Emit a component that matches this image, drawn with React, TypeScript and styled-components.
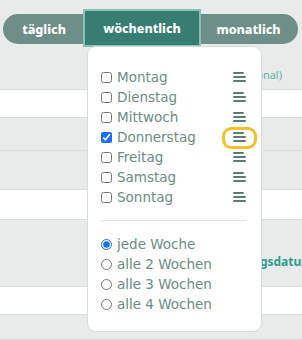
import React, { useState } from 'react';
import styled, { createGlobalStyle } from 'styled-components';

const GlobalStyle = createGlobalStyle`
  html, body {
    margin: 0;
    padding: 0;
    background: #e8ebea;
    font-family: 'DejaVu Sans', 'Noto Sans', sans-serif;
  }
`;

const Page = styled.div`
  position: relative;
  width: 302px;
  height: 340px;
  overflow: hidden;
  background: #e8ebea;
`;

const Header = styled.div`
  padding: 14px 4px 0 3px;
`;

const Toggle = styled.div`
  display: flex;
  height: 30px;
  border-radius: 15px;
  background: #6d8f87;
`;

const Segment = styled.button<{ $active?: boolean; $width: number }>`
  width: ${(p) => p.$width}px;
  border: none;
  padding: 0;
  font-family: 'Noto Sans', sans-serif;
  font-weight: 800;
  font-size: 12.5px;
  color: #ffffff;
  background: ${(p) => (p.$active ? '#377d72' : 'transparent')};
  box-shadow: ${(p) => (p.$active ? '0 0 0 2px #86c2b6' : 'none')};
  height: ${(p) => (p.$active ? '34px' : '30px')};
  margin-top: ${(p) => (p.$active ? '-3px' : '0')};
  position: relative;
  z-index: ${(p) => (p.$active ? 1 : 0)};
`;

const Row = styled.div<{ $white?: boolean; $height: number }>`
  height: ${(p) => p.$height}px;
  box-sizing: border-box;
  background: ${(p) => (p.$white ? '#ffffff' : '#e8ebea')};
  border-bottom: 1px solid #d7dddb;
  position: relative;
`;

const Hint = styled.span`
  position: absolute;
  right: 20px;
  top: 23px;
  font-family: 'Noto Sans', sans-serif;
  font-size: 11px;
  color: #5fb1a1;
`;

const FieldLabel = styled.span`
  position: absolute;
  right: -11px;
  top: 33px;
  font-family: 'Noto Sans', sans-serif;
  font-size: 12px;
  font-weight: bold;
  color: #2f9c89;
  white-space: nowrap;
`;

const Dropdown = styled.div`
  position: absolute;
  left: 87px;
  top: 46px;
  width: 175px;
  height: 286px;
  box-sizing: border-box;
  background: #ffffff;
  border: 1px solid #d8dcdb;
  border-radius: 9px;
  padding: 20px 15px 0 12px;
  z-index: 2;
`;

const List = styled.div`
  display: flex;
  flex-direction: column;
`;

const Item = styled.label`
  display: flex;
  align-items: center;
  height: 20px;
  font-size: 13.5px;
  color: #6d8b85;
  cursor: pointer;
`;

const Check = styled.input`
  width: 11px;
  height: 11px;
  margin: 0 5px 0 1px;
  accent-color: #1a6ef0;
`;

const Handle = styled.span<{ $marked?: boolean }>`
  margin-left: auto;
  position: relative;
  width: 13px;
  height: 12px;
  display: flex;
  flex-direction: column;
  justify-content: space-between;
  padding: 1px 0;
  box-sizing: border-box;

  span {
    height: 2px;
    background: #5f7b75;
    border-radius: 1px;
  }
  span:first-child {
    width: 11px;
  }

  &::after {
    content: '';
    display: ${(p) => (p.$marked ? 'block' : 'none')};
    position: absolute;
    left: -11px;
    top: -4px;
    width: 35px;
    height: 22px;
    box-sizing: border-box;
    border: 3px solid #f0c232;
    border-radius: 9px;
  }
`;

const Divider = styled.div`
  height: 1px;
  background: #e2e6e5;
  margin: 13px 0 13px 1px;
`;

const days = ['Montag', 'Dienstag', 'Mittwoch', 'Donnerstag', 'Freitag', 'Samstag', 'Sonntag'];
const intervals = ['jede Woche', 'alle 2 Wochen', 'alle 3 Wochen', 'alle 4 Wochen'];

export default function App() {
  const [checked, setChecked] = useState<string[]>(['Donnerstag']);
  const [interval, setInterval] = useState('jede Woche');

  const toggleDay = (day: string) =>
    setChecked((c) => (c.includes(day) ? c.filter((d) => d !== day) : [...c, day]));

  return (
    <Page>
      <GlobalStyle />
      <Header>
        <Toggle>
          <Segment $width={82}>täglich</Segment>
          <Segment $width={114} $active>
            wöchentlich
          </Segment>
          <Segment $width={99}>monatlich</Segment>
        </Toggle>
      </Header>
      <Row $height={46}>
        <Hint>(optional)</Hint>
      </Row>
      <Row $height={28} $white />
      <Row $height={33} />
      <Row $height={39} />
      <Row $height={30} $white />
      <Row $height={67}>
        <FieldLabel>Wiederholungsdatum</FieldLabel>
      </Row>
      <Row $height={28} $white />
      <Row $height={25} />

      <Dropdown>
        <List>
          {days.map((day) => (
            <Item key={day}>
              <Check type="checkbox" checked={checked.includes(day)} onChange={() => toggleDay(day)} />
              {day}
              <Handle $marked={day === 'Donnerstag'}>
                <span />
                <span />
                <span />
              </Handle>
            </Item>
          ))}
        </List>
        <Divider />
        <List>
          {intervals.map((iv) => (
            <Item key={iv}>
              <Check type="radio" name="interval" checked={interval === iv} onChange={() => setInterval(iv)} />
              {iv}
            </Item>
          ))}
        </List>
      </Dropdown>
    </Page>
  );
}
